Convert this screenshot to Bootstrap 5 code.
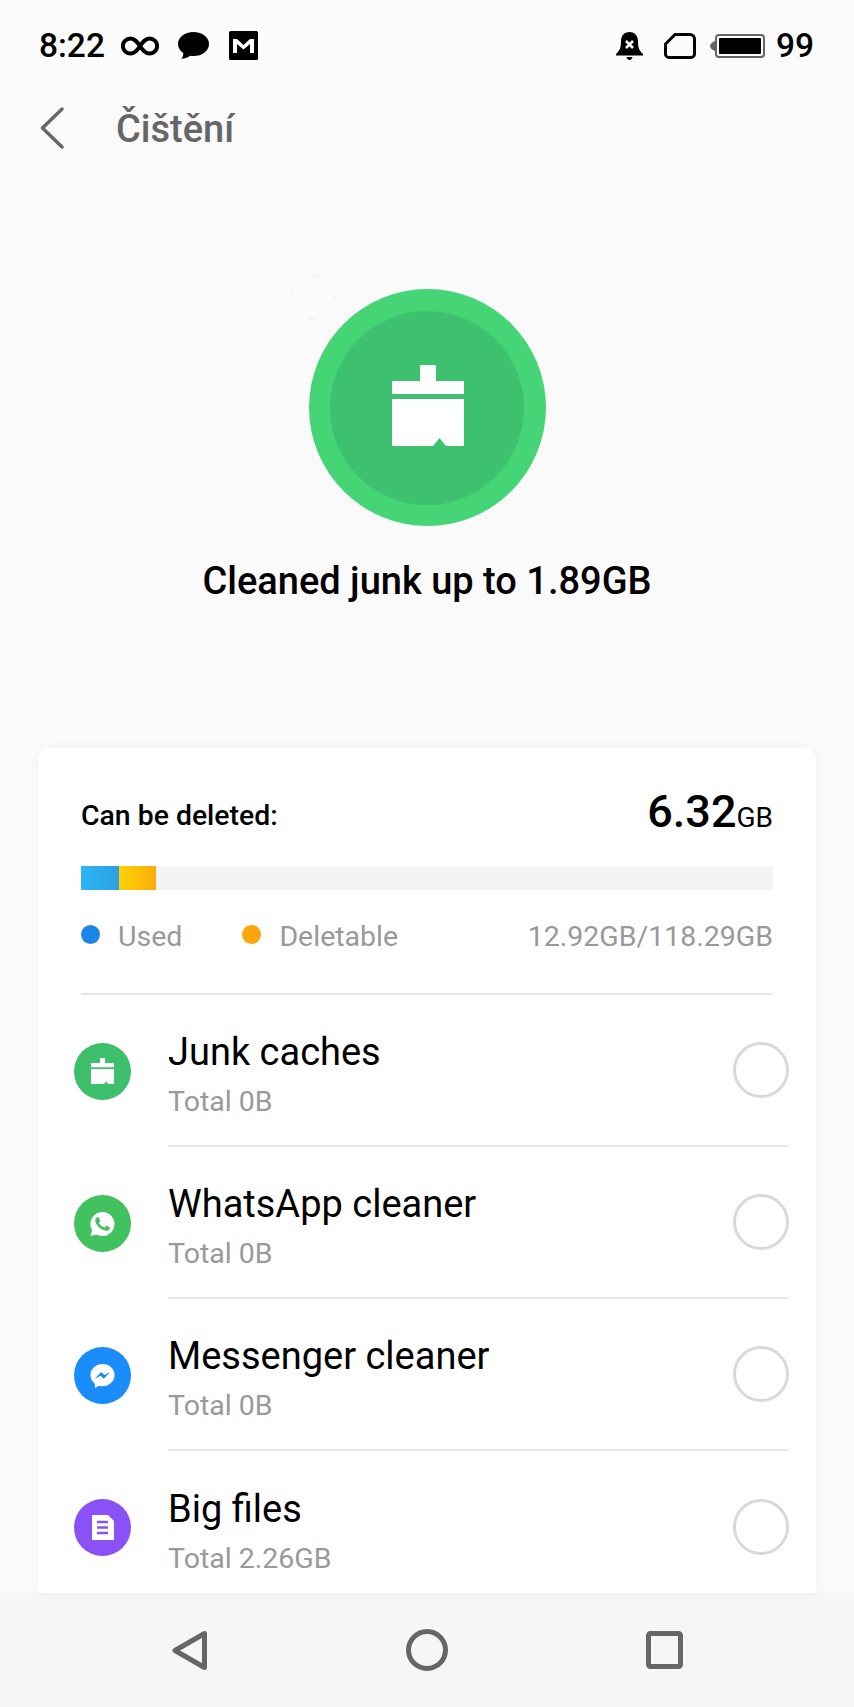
<!DOCTYPE html>
<html lang="cs">

<head>
  <meta charset="UTF-8">
  <meta name="viewport" content="width=device-width, initial-scale=1">
  <title>Čištění</title>
  <link href="https://cdn.jsdelivr.net/npm/bootstrap@5.3.0/dist/css/bootstrap.min.css" rel="stylesheet">
  <style>
    html, body {
      height: 1707px;
      overflow: hidden;
    }

    body {
      background-color: #fafafa;
      color: #000;
      font-family: Roboto, "Noto Sans", sans-serif;
    }

    .phone {
      height: 1707px;
    }

    .status-bar {
      height: 72px;
      flex: none;
      padding: 19px 40px 0 39px;
      background-color: #fbfbfb;
    }

    .status-text {
      font-size: 33.5px;
      font-weight: 500;
      line-height: 54px;
    }

    .gap-chat {
      margin-left: 18px;
    }

    .gap-mail {
      margin-left: 19px;
    }

    .gap-sim {
      margin-left: 21px;
    }

    .gap-battery {
      margin-left: 14px;
    }

    .gap-level {
      margin-left: 11px;
    }

    .app-header {
      height: 112px;
      flex: none;
      padding-left: 40px;
    }

    .app-title {
      margin: 2px 0 0 52px;
      font-size: 38px;
      font-weight: 500;
      line-height: 1;
      color: #666;
    }

    .hero {
      height: 564px;
      flex: none;
      padding-top: 105px;
    }

    .ghost-ring {
      position: absolute;
      left: 288px;
      top: 88px;
    }

    .clean-ring {
      width: 237px;
      height: 237px;
      background-color: #45d476;
    }

    .clean-core {
      width: 194px;
      height: 194px;
      background-color: #3dc16e;
    }

    .brush-big {
      margin: 0 0 4px 2px;
    }

    .hero-text {
      margin: 34px 0 0;
      font-size: 38px;
      font-weight: 500;
      line-height: 42px;
    }

    .junk-card {
      margin: 0 38px;
      border: 0;
      border-radius: 12px 12px 0 0;
      box-shadow: 0 0 14px rgba(0, 0, 0, 0.035);
      overflow: hidden;
    }

    .summary {
      flex: none;
      padding: 37px 43px 0;
    }

    .summary-label {
      margin-top: 3px;
      font-size: 28.4px;
      font-weight: 500;
    }

    .summary-value {
      font-size: 45px;
      font-weight: 500;
      line-height: 54px;
    }

    .summary-unit {
      font-size: 28px;
      font-weight: 400;
    }

    .usage-bar {
      height: 24px;
      margin-top: 21px;
      border-radius: 0;
      background-color: #f4f4f4;
    }

    .usage-used {
      width: 38px;
      background: linear-gradient(90deg, #2cb6f6, #2b9fe0);
    }

    .usage-del {
      width: 37px;
      background: linear-gradient(90deg, #ffd204, #fdab0b);
    }

    .legend {
      height: 105px;
      border-bottom: 2px solid #e8e8e8;
      padding-bottom: 14px;
      font-size: 28.5px;
      color: #999;
    }

    .legend-text {
      padding-top: 6px;
    }

    .dot {
      width: 19px;
      height: 19px;
      margin-right: 18px;
    }

    .dot-used {
      background-color: #1e85e8;
    }

    .dot-del {
      margin-left: 60px;
      background-color: #fca50c;
    }

    .clean-row {
      height: 152px;
      flex: none;
      padding: 0 27px 0 36px;
    }

    .row-icon {
      width: 57px;
      height: 57px;
      flex: none;
    }

    .row-body {
      height: 100%;
      margin-left: 37px;
      border-bottom: 2px solid #e8e8e8;
    }

    .row-last {
      border-bottom: 0;
    }

    .row-text {
      padding-top: 8px;
    }

    .row-title {
      font-size: 38px;
      line-height: 42px;
    }

    .row-sub {
      margin-top: 13px;
      font-size: 28.5px;
      line-height: 32px;
      color: #999;
    }

    .row-check.form-check-input {
      width: 56px;
      height: 56px;
      margin: 0;
      flex: none;
      border: 3px solid #d9d9d9;
      background-color: #fff;
    }

    .nav-keys {
      height: 114px;
      flex: none;
      padding: 0 171px 0 172px;
      background-color: #f6f6f6;
    }
  </style>
</head>

<body>
  <div class="phone d-flex flex-column">
    <!-- status bar -->
    <div class="status-bar d-flex align-items-center">
      <span class="status-text">8:22</span>
      <svg class="ms-3" width="38" height="22" viewBox="0 0 40 22"><path d="M20 11c-3-4.500-5.500-8-10-8a8 8 0 0 0 0 16c4.500 0 7-3.500 10-8s5.500-8 10-8a8 8 0 0 1 0 16c-4.500 0-7-3.500-10-8z" fill="none" stroke="#000" stroke-width="4.200"/></svg>
      <svg class="gap-chat" width="33" height="29" viewBox="0 0 33 29"><path d="M16.500 1C7.700 1 1 6.400 1 13c0 3.600 2 6.800 5.200 9 .2 2.100-.6 4.100-1.700 5.800 3.500 0 6.600-1.400 8.500-3 1.200.2 2.300.3 3.500.3 8.800 0 15.500-5.500 15.500-12.100S25.300 1 16.500 1z"/></svg>
      <svg class="gap-mail" width="29" height="29" viewBox="0 0 29 29"><rect width="29" height="29" rx="1.500"/><path d="M4 8h4l6.500 6L21 8h4v14h-4V13l-6.500 5.500L8 13v9H4z" fill="#fff"/></svg>

      <svg class="ms-auto" width="27" height="28" viewBox="0 0 27 28"><path d="M13.500 0c5.500 0 8.500 4 8.500 9.500 0 5.500 1 9 5 12.500v1.500H0V22c4-3.500 5-7 5-12.500C5 4 8 0 13.500 0z"/><path d="M10.500 25h6c-.5 2-1.500 3-3 3s-2.500-1-3-3z"/><path d="M10 9l7 7M17 9l-7 7" stroke="#fff" stroke-width="2.600"/></svg>
      <svg class="gap-sim" width="32" height="26" viewBox="0 0 32 26"><path d="M11 1.500h15a4.500 4.500 0 0 1 4.500 4.500v15a3.500 3.500 0 0 1-3.500 3.500H5A3.500 3.500 0 0 1 1.500 21v-10z" fill="none" stroke="#000" stroke-width="3" stroke-linejoin="round"/></svg>
      <svg class="gap-battery" width="55" height="24" viewBox="0 0 55 24"><path d="M5 7v10C2 16 0 14 0 12s2-4 5-5z" fill="#666"/><rect x="6" y="1" width="48" height="22" rx="3" fill="#fff" stroke="#666" stroke-width="2"/><rect x="9" y="4" width="42" height="16" rx="1"/></svg>
      <span class="status-text gap-level">99</span>
    </div>

    <!-- header -->
    <div class="app-header d-flex align-items-center">
      <svg width="24" height="42" viewBox="0 0 24 42"><path d="M22 2L2.500 21 22 40" fill="none" stroke="#666" stroke-width="3.400" stroke-linecap="round" stroke-linejoin="round"/></svg>
      <h1 class="app-title">Čištění</h1>
    </div>

    <!-- hero -->
    <div class="hero position-relative d-flex flex-column align-items-center">
      <svg class="ghost-ring" width="50" height="50" viewBox="0 0 50 50"><circle cx="25" cy="25" r="22" fill="none" stroke="#f3f0e8" stroke-width="1.200" stroke-dasharray="9 26" stroke-dashoffset="4.500"/></svg>
      <div class="clean-ring rounded-circle d-flex align-items-center justify-content-center">
        <div class="clean-core rounded-circle d-flex align-items-center justify-content-center">
          <svg class="brush-big" width="72" height="81" viewBox="0 0 72 81"><path d="M28 0h16v16h28v13H0V16h28zM0 34h72v47H54l-6.500-8-6.500 8H0z" fill="#fff"/></svg>
        </div>
      </div>
      <p class="hero-text">Cleaned junk up to 1.89GB</p>
    </div>

    <!-- junk card -->
    <div class="junk-card card flex-grow-1">
      <div class="summary">
        <div class="d-flex justify-content-between align-items-center">
          <span class="summary-label">Can be deleted:</span>
          <span class="summary-value">6.32<span class="summary-unit">GB</span></span>
        </div>
        <div class="usage-bar progress">
          <div class="usage-used progress-bar"></div>
          <div class="usage-del progress-bar"></div>
        </div>
        <div class="legend d-flex align-items-center">
          <span class="dot dot-used rounded-circle"></span><span class="legend-text">Used</span>
          <span class="dot dot-del rounded-circle"></span><span class="legend-text">Deletable</span>
          <span class="legend-text ms-auto">12.92GB/118.29GB</span>
        </div>
      </div>

      <div class="clean-row d-flex align-items-center">
        <svg class="row-icon" viewBox="0 0 57 57"><circle cx="28.500" cy="28.500" r="28.500" fill="#3dbf6c"/><path transform="translate(17 15) scale(.32)" d="M28 0h16v16h28v13H0V16h28zM0 34h72v47H54l-6.500-8-6.500 8H0z" fill="#fff"/></svg>
        <div class="row-body d-flex align-items-center flex-grow-1">
          <div class="row-text flex-grow-1">
            <div class="row-title">Junk caches</div>
            <div class="row-sub">Total 0B</div>
          </div>
          <input class="row-check form-check-input" type="radio" aria-label="Junk caches">
        </div>
      </div>

      <div class="clean-row d-flex align-items-center">
        <svg class="row-icon" viewBox="0 0 57 57"><circle cx="28.500" cy="28.500" r="28.500" fill="#41c25f"/><g transform="translate(14 14.500) scale(1.210)"><path d="M12 2a10 10 0 0 0-8.600 15.100L2 22l5-1.300A10 10 0 1 0 12 2z" fill="#fff"/><path d="M17.470 14.380c-.3-.15-1.760-.87-2.030-.97-.27-.1-.47-.15-.67.15-.2.3-.77.97-.94 1.160-.17.2-.35.22-.64.07-.3-.15-1.250-.46-2.390-1.470-.88-.79-1.480-1.760-1.650-2.060-.17-.3-.02-.46.13-.6.13-.13.3-.35.45-.52.15-.17.2-.3.3-.5.1-.2.05-.37-.02-.52-.08-.15-.67-1.610-.92-2.210-.24-.58-.49-.5-.67-.51h-.57c-.2 0-.52.07-.79.37-.27.3-1.040 1.020-1.040 2.480s1.070 2.880 1.210 3.070c.15.2 2.100 3.200 5.080 4.490.71.31 1.260.49 1.690.63.71.23 1.360.2 1.870.12.570-.09 1.760-.72 2.010-1.410.25-.7.25-1.290.17-1.410-.07-.13-.27-.2-.57-.35z" fill="#41c25f"/></g></svg>
        <div class="row-body d-flex align-items-center flex-grow-1">
          <div class="row-text flex-grow-1">
            <div class="row-title">WhatsApp cleaner</div>
            <div class="row-sub">Total 0B</div>
          </div>
          <input class="row-check form-check-input" type="radio" aria-label="WhatsApp cleaner">
        </div>
      </div>

      <div class="clean-row d-flex align-items-center">
        <svg class="row-icon" viewBox="0 0 57 57"><circle cx="28.500" cy="28.500" r="28.500" fill="#1a8cfb"/><g transform="translate(14 14.500) scale(1.210)"><path d="M12 2C6.500 2 2 6.100 2 11.200c0 2.900 1.400 5.400 3.700 7.100V22l3.400-1.900c.9.3 1.900.4 2.900.4 5.500 0 10-4.100 10-9.300S17.500 2 12 2z" fill="#fff"/><path d="M13 14.300l-2.500-2.600-5 2.600 5.500-5.700 2.600 2.600 4.900-2.600z" fill="#1a8cfb"/></g></svg>
        <div class="row-body d-flex align-items-center flex-grow-1">
          <div class="row-text flex-grow-1">
            <div class="row-title">Messenger cleaner</div>
            <div class="row-sub">Total 0B</div>
          </div>
          <input class="row-check form-check-input" type="radio" aria-label="Messenger cleaner">
        </div>
      </div>

      <div class="clean-row d-flex align-items-center">
        <svg class="row-icon" viewBox="0 0 57 57"><circle cx="28.500" cy="28.500" r="28.500" fill="#8a52f5"/><path d="M18 16h16l6 6v19H18z" fill="#fff"/><path d="M23 23h11M23 28.500h11M23 34h11" stroke="#8a52f5" stroke-width="2.400"/></svg>
        <div class="row-body row-last d-flex align-items-center flex-grow-1">
          <div class="row-text flex-grow-1">
            <div class="row-title">Big files</div>
            <div class="row-sub">Total 2.26GB</div>
          </div>
          <input class="row-check form-check-input" type="radio" aria-label="Big files">
        </div>
      </div>
    </div>

    <!-- navigation keys -->
    <div class="nav-keys d-flex align-items-center justify-content-between">
      <svg width="36" height="41" viewBox="0 0 36 41"><path d="M32.500 3.500v34L3 20.500z" fill="none" stroke="#666" stroke-width="5" stroke-linejoin="round"/></svg>
      <svg width="42" height="42" viewBox="0 0 42 42"><circle cx="21" cy="21" r="18.500" fill="none" stroke="#666" stroke-width="5"/></svg>
      <svg width="37" height="38" viewBox="0 0 37 38"><rect x="2.500" y="2.500" width="32" height="33" rx="2" fill="none" stroke="#666" stroke-width="5"/></svg>
    </div>
  </div>

  <script src="https://cdn.jsdelivr.net/npm/bootstrap@5.3.0/dist/js/bootstrap.bundle.min.js"></script>
</body>

</html>
